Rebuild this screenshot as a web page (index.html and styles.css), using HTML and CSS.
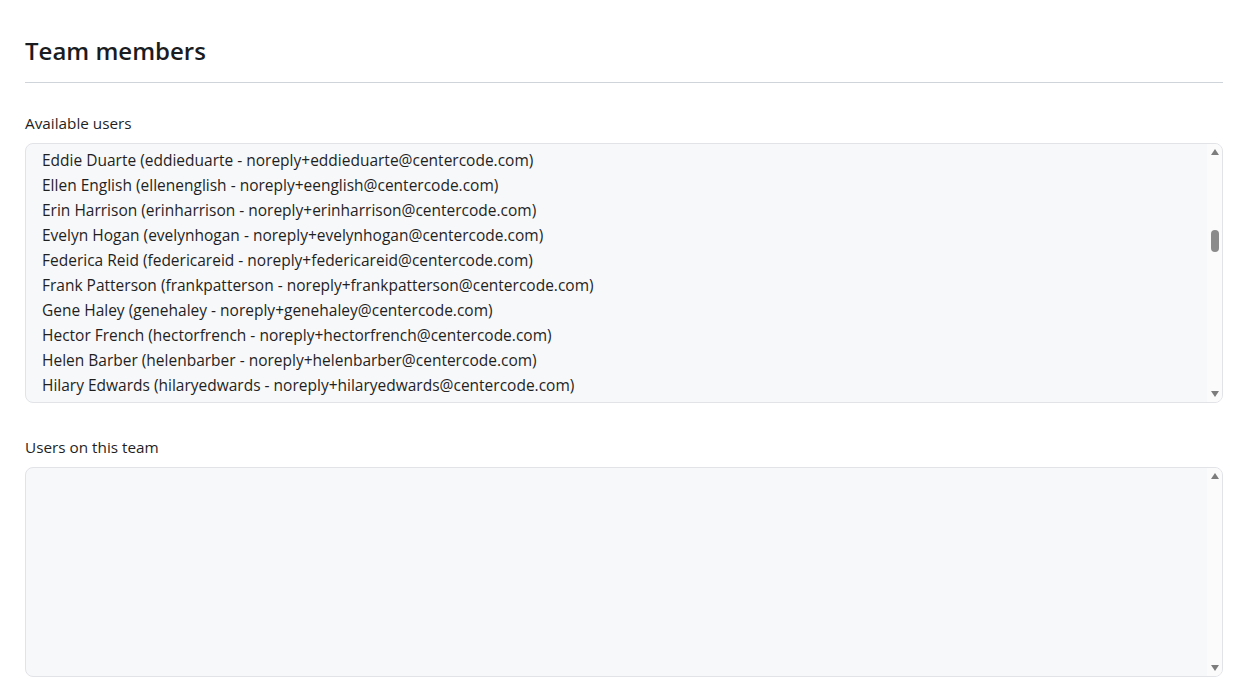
FILE: index.html
```
<!DOCTYPE html>
<html>
<head>
<meta charset="utf-8">
<link rel="stylesheet" href="styles.css">
</head>
<body>
<div class="page">
  <h1 class="title">Team members</h1>
  <hr class="rule">
  <div class="field">
    <div class="label">Available users</div>
    <div class="listbox tall">
      <div class="items">
        <div class="item hidden-row">Dora Stein (dorastein - noreply+dorastein@centercode.com)</div>
        <div class="item">Eddie Duarte (eddieduarte - noreply+eddieduarte@centercode.com)</div>
        <div class="item">Ellen English (ellenenglish - noreply+eenglish@centercode.com)</div>
        <div class="item">Erin Harrison (erinharrison - noreply+erinharrison@centercode.com)</div>
        <div class="item">Evelyn Hogan (evelynhogan - noreply+evelynhogan@centercode.com)</div>
        <div class="item">Federica Reid (federicareid - noreply+federicareid@centercode.com)</div>
        <div class="item">Frank Patterson (frankpatterson - noreply+frankpatterson@centercode.com)</div>
        <div class="item">Gene Haley (genehaley - noreply+genehaley@centercode.com)</div>
        <div class="item">Hector French (hectorfrench - noreply+hectorfrench@centercode.com)</div>
        <div class="item">Helen Barber (helenbarber - noreply+helenbarber@centercode.com)</div>
        <div class="item">Hilary Edwards (hilaryedwards - noreply+hilaryedwards@centercode.com)</div>
      </div>
      <div class="scrollbar">
        <span class="arrow up"></span>
        <div class="track"><span class="thumb"></span></div>
        <span class="arrow down"></span>
      </div>
    </div>
  </div>
  <div class="field second">
    <div class="label">Users on this team</div>
    <div class="listbox short">
      <div class="items"></div>
      <div class="scrollbar">
        <span class="arrow up"></span>
        <div class="track"></div>
        <span class="arrow down"></span>
      </div>
    </div>
  </div>
</div>
</body>
</html>
```
FILE: styles.css
```
html, body {
  margin: 0;
  padding: 0;
  background: #ffffff;
}
body {
  font-family: "Open Sans", "Noto Sans", sans-serif;
  color: #1f1f1f;
}
.page {
  padding: 35px 25px 0 25px;
}
.title {
  margin: 0;
  font-size: 24px;
  line-height: 32px;
  font-weight: 600;
  color: #1b1c1f;
}
.rule {
  margin: 15px 0 0 0;
  border: 0;
  height: 1px;
  background: #cfd3da;
}
.field {
  margin-top: 30px;
}
.field.second {
  margin-top: 34px;
}
.label {
  font-size: 15.3px;
  line-height: 20px;
  margin-bottom: 10px;
  color: #1f1f1f;
}
.listbox {
  display: flex;
  border: 1px solid #e2e3e7;
  border-radius: 8px;
  background: #f7f8fa;
  overflow: hidden;
  box-sizing: border-box;
}
.listbox.tall { height: 260px; }
.listbox.short { height: 210px; }
.items {
  flex: 1;
  padding-left: 16px;
  overflow: hidden;
}
.item {
  font-size: 15.5px;
  line-height: 25px;
  white-space: nowrap;
  color: #1f1f1f;
}
.item.hidden-row {
  margin-top: -21px;
  line-height: 21px;
  padding-bottom: 4px;
  color: #9aa0a6;
}
.scrollbar {
  width: 15px;
  background: #fbfbfb;
  display: flex;
  flex-direction: column;
  align-items: center;
}
.arrow {
  width: 0;
  height: 0;
  border-left: 4.5px solid transparent;
  border-right: 4.5px solid transparent;
}
.arrow.up {
  margin-top: 5px;
  border-bottom: 6px solid #7d7d7d;
}
.arrow.down {
  margin-bottom: 5px;
  border-top: 6px solid #7d7d7d;
}
.track {
  flex: 1;
  width: 100%;
  display: flex;
  justify-content: center;
}
.thumb {
  margin-top: 75px;
  width: 8px;
  height: 22px;
  border-radius: 4px;
  background: #8b8b8b;
}
```
